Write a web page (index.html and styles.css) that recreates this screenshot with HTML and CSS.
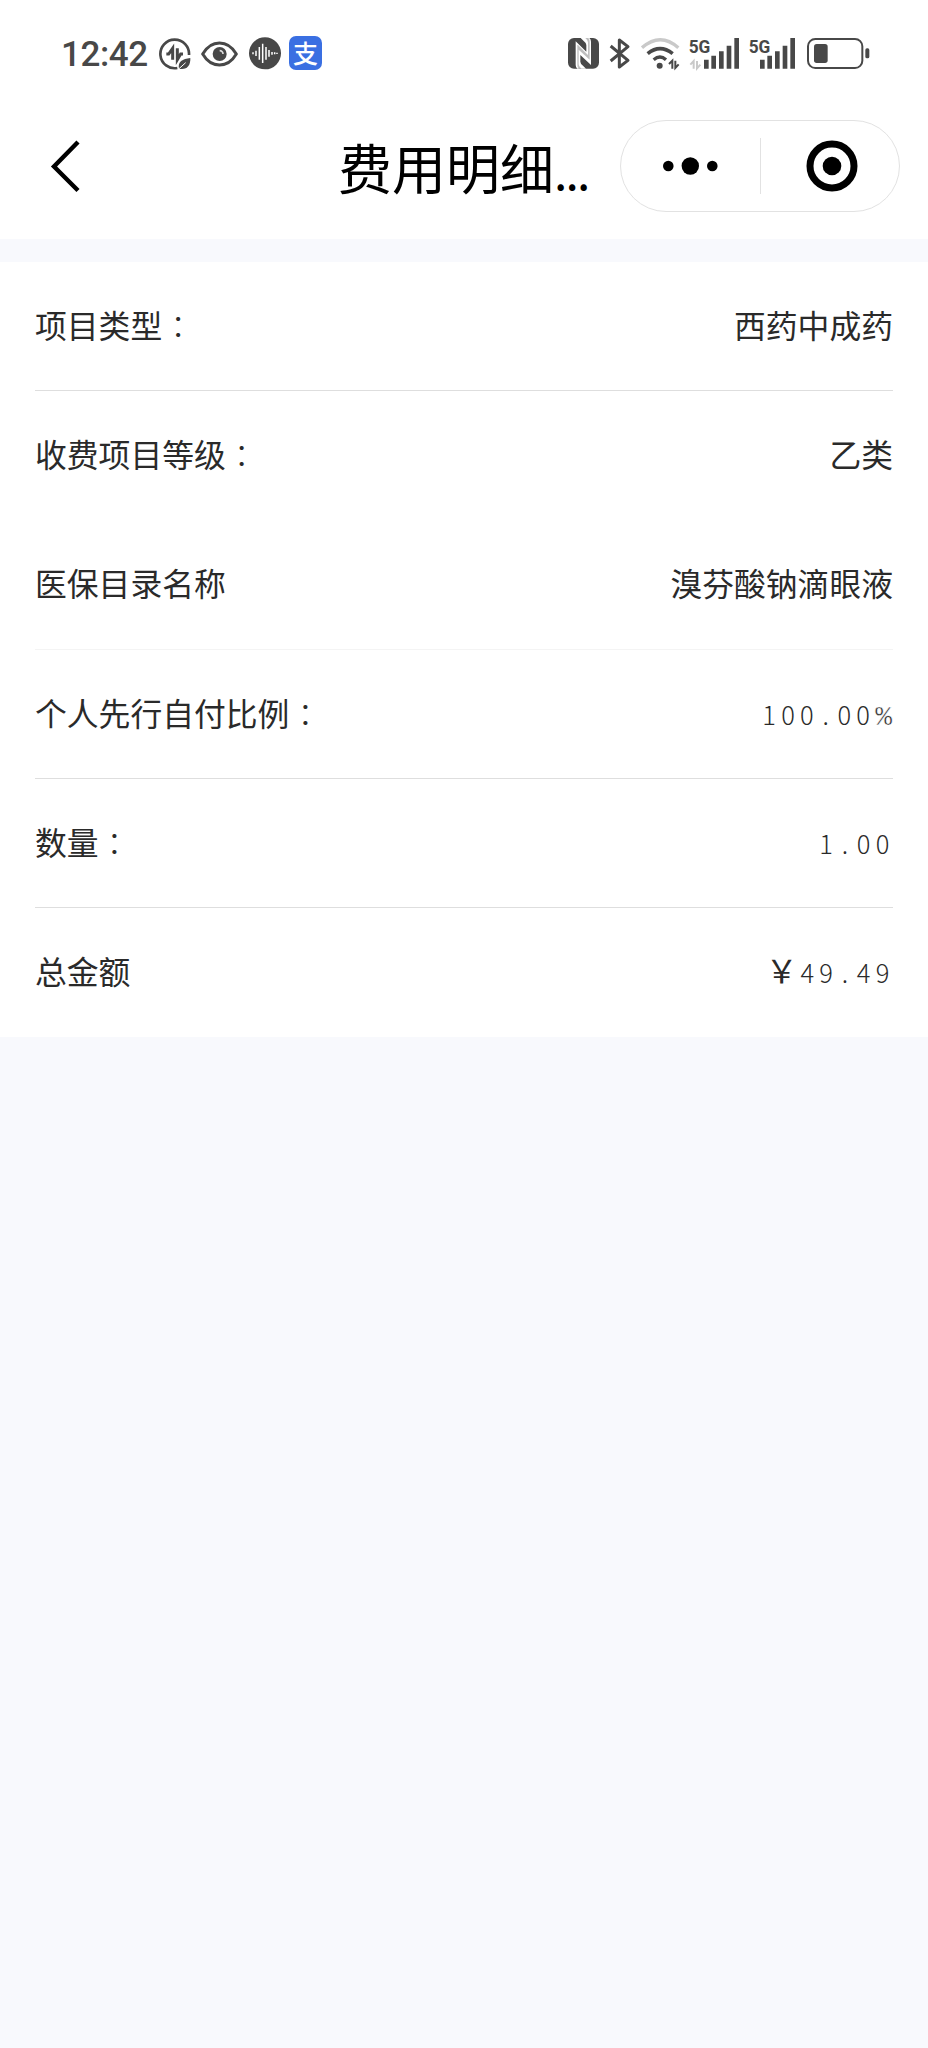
FILE: index.html
```html
<!DOCTYPE html>
<html lang="zh-CN">
<head>
<meta charset="utf-8">
<title>费用明细</title>
<link rel="stylesheet" href="styles.css">
</head>
<body>
<header class="header">
  <div class="status">
    <span class="time">12:42</span>
    <svg class="ic-data" width="32" height="36" viewBox="327 33 96 108">
      <path d="M382 129A43 43 0 1 1 417 90" fill="none" stroke="#484848" stroke-width="8"/>
      <path d="M349 87H356L368 70V104M382 70V104L392 87H399" fill="none" stroke="#484848" stroke-width="9"/>
      <path d="M387 131C382 110 398 102 421 99C422 122 410 136 387 131Z" fill="#484848"/>
      <path d="M386 132L407 113" stroke="#fff" stroke-width="3"/>
    </svg>
    <svg class="ic-eye" width="37" height="36" viewBox="453 33 111 108">
      <path d="M458 87C484 43 533 43 559 87C533 131 484 131 458 87Z" fill="none" stroke="#484848" stroke-width="9" stroke-linejoin="round"/>
      <circle cx="509" cy="87" r="21" fill="#484848"/>
      <path d="M509 77A10 10 0 0 1 519 87" fill="none" stroke="#ddd" stroke-width="5"/>
    </svg>
    <svg class="ic-voice" width="32" height="36" viewBox="597 33 96 108">
      <circle cx="645" cy="85" r="48" fill="#484848"/>
      <path d="M609 82V88M618 77V93M628 66V104M638 56V114M648 66V104M657 75V95M666 81V89M674 82V88M681 83V87" stroke="#fff" stroke-width="4.5"/>
    </svg>
    <span class="pay">支</span>
    <span class="spacer"></span>
    <svg class="ic-nfc" width="31" height="36" viewBox="24 33 93 108">
      <rect x="24" y="39" width="93" height="92" rx="18" fill="#484848"/>
      <path d="M47 49L79 80V60Q79 54 71 48L62 39H88Q93 43 93 50V120L61 90V110Q61 116 69 122L78 131H52Q47 127 47 120Z" fill="#fff"/>
      <path d="M54 60L84 90V52Q84 46 76 39H85Q89 43 89 50V104L56 74V118Q56 124 64 131H56Q52 127 52 120V60Z" fill="#484848" opacity="0.35"/>
    </svg>
    <svg class="ic-bt" width="22" height="36" viewBox="147 33 66 108">
      <path d="M152 63L204 106L178 126V45L204 65L152 108" fill="none" stroke="#484848" stroke-width="9" stroke-linejoin="round"/>
    </svg>
    <svg class="ic-wifi" width="39" height="36" viewBox="243 33 117 108">
      <path d="M246 68Q301 20 355 68" fill="none" stroke="#c9c9c9" stroke-width="10"/>
      <path d="M263 86Q300 56 338 86" fill="none" stroke="#484848" stroke-width="11"/>
      <path d="M281 104Q300 88 318 104" fill="none" stroke="#484848" stroke-width="10"/>
      <circle cx="299" cy="122" r="9" fill="#484848"/>
      <path d="M327 117L337 107V131M346 107V129L356 118" fill="none" stroke="#484848" stroke-width="6"/>
    </svg>
    <svg class="ic-signal" width="52" height="36" viewBox="384 33 156 108">
      <text class="net" x="386" y="83" textLength="65" lengthAdjust="spacingAndGlyphs">5G</text>
      <path d="M391 119L401 108V131M411 108V130L421 119" fill="none" stroke="#c9c9c9" stroke-width="6"/>
      <path d="M439 104V131M461 92V131M484 79V131M507 62V131M530 39V131" stroke="#484848" stroke-width="14"/>
    </svg>
    <svg class="ic-signal" width="48" height="36" viewBox="564 33 144 108">
      <text class="net" x="566" y="83" textLength="65" lengthAdjust="spacingAndGlyphs">5G</text>
      <path d="M607 104V131M629 92V131M652 79V131M675 62V131M698 39V131" stroke="#484848" stroke-width="14"/>
    </svg>
    <svg class="ic-battery" width="63" height="36" viewBox="741 33 189 108">
      <rect x="744" y="42" width="163" height="87" rx="22" fill="none" stroke="#484848" stroke-width="6"/>
      <rect x="762" y="57" width="41" height="57" rx="8" fill="#484848"/>
      <rect x="916" y="70" width="12" height="30" rx="5" fill="#484848"/>
    </svg>
  </div>
  <nav class="nav">
    <svg class="back" width="30" height="54" viewBox="0 0 30 54">
      <path d="M28 2L4 26.5L28 50.5" fill="none" stroke="#000" stroke-width="4.4"/>
    </svg>
    <h1 class="title">费用明细<span class="ellipsis">...</span></h1>
    <div class="capsule">
      <svg class="more" width="56" height="20" viewBox="0 0 56 20">
        <circle cx="5.3" cy="10" r="5.3"/><circle cx="27.3" cy="10" r="8.7"/><circle cx="49.3" cy="10" r="5.3"/>
      </svg>
      <span class="divider"></span>
      <svg class="target" width="52" height="52" viewBox="0 0 52 52">
        <circle cx="26" cy="26" r="22" fill="none" stroke="#000" stroke-width="7"/><circle cx="26" cy="26" r="9.3"/>
      </svg>
    </div>
  </nav>
</header>
<main class="card">
  <div class="row"><span class="label">项目类型<span class="colon" lang="zh-TW">：</span></span><span class="value">西药中成药</span></div>
  <div class="row plain"><span class="label">收费项目等级<span class="colon" lang="zh-TW">：</span></span><span class="value">乙类</span></div>
  <div class="row faint"><span class="label">医保目录名称</span><span class="value">溴芬酸钠滴眼液</span></div>
  <div class="row"><span class="label">个人先行自付比例<span class="colon" lang="zh-TW">：</span></span><span class="num">100<span class="dot">.</span>00<span class="pct">%</span></span></div>
  <div class="row"><span class="label">数量<span class="colon" lang="zh-TW">：</span></span><span class="num">1<span class="dot">.</span>00</span></div>
  <div class="row plain"><span class="label">总金额</span><span class="num"><span class="yen">￥</span>49<span class="dot">.</span>49</span></div>
</main>
</body>
</html>
```

FILE: styles.css
```css
* { box-sizing: border-box; }
body {
  margin: 0;
  min-height: 2048px;
  background: #f8f9fd;
  color: #2a2a2a;
  font-family: "Noto Sans CJK SC", sans-serif;
}
svg { display: block; flex: none; }
.header { height: 239px; background: #fff; }
.status {
  display: flex;
  align-items: flex-start;
  height: 108px;
  padding: 36px 58px 0 61px;
}
.time {
  width: 98px;
  font: 500 35px/38px Roboto, sans-serif;
  letter-spacing: -0.4px;
  color: #484848;
  white-space: nowrap;
}
.ic-eye { margin-left: 10px; }
.ic-voice { margin-left: 11px; }
.pay {
  width: 33px;
  height: 34px;
  margin-left: 8px;
  border-radius: 7px;
  background: #3a6fe2;
  color: #fff;
  font-size: 25px;
  font-weight: 500;
  line-height: 33px;
  text-align: center;
}
.spacer { flex: 1; }
.ic-bt, .ic-wifi { margin-left: 10px; }
.ic-signal { margin-left: 8px; }
.ic-battery { margin-left: 11px; }
.net { font: 700 57px Roboto, sans-serif; fill: #484848; }
.nav {
  display: flex;
  align-items: flex-start;
  padding: 12px 28px 0 50px;
}
.back { margin-top: 20px; }
.title {
  margin: 7px 0 0 258px;
  width: 282px;
  color: #000;
  font-size: 54px;
  font-weight: 400;
  line-height: 79px;
  white-space: nowrap;
}
.ellipsis { font-size: 48px; letter-spacing: -1.8px; }
.capsule {
  display: flex;
  align-items: center;
  width: 280px;
  height: 92px;
  border: 1px solid #e2e2e2;
  border-radius: 46px;
}
.more { margin-left: 42px; }
.divider { width: 1px; height: 56px; margin-left: 41px; background: #e2e2e2; }
.target { margin-left: 45px; }
.card {
  margin-top: 23px;
  padding: 0 35px;
  background: #fff;
}
.row {
  display: flex;
  justify-content: space-between;
  height: 129.2px;
  border-bottom: 1px solid #dedede;
  font-size: 31.8px;
  line-height: 125px;
  white-space: nowrap;
}
.plain { border-bottom-color: transparent; }
.faint { border-bottom-color: #f4f4f4; }
.colon { font-family: "Noto Sans CJK TC", sans-serif; font-weight: 300; vertical-align: -1px; line-height: 1; }
.num {
  margin-right: -1.5px;
  font-size: 25.5px;
  font-weight: 300;
  line-height: 128px;
  letter-spacing: 5.2px;
}
.dot { padding-left: 3.6px; letter-spacing: 8.7px; }
.pct { font-family: "Liberation Mono", monospace; font-size: 28px; letter-spacing: 2.5px; line-height: 1; -webkit-text-stroke: 0.5px #fff; }
.yen { margin: 0 3px 0 -3px; font-size: 31.8px; font-weight: 400; letter-spacing: 0; line-height: 1; }
```
